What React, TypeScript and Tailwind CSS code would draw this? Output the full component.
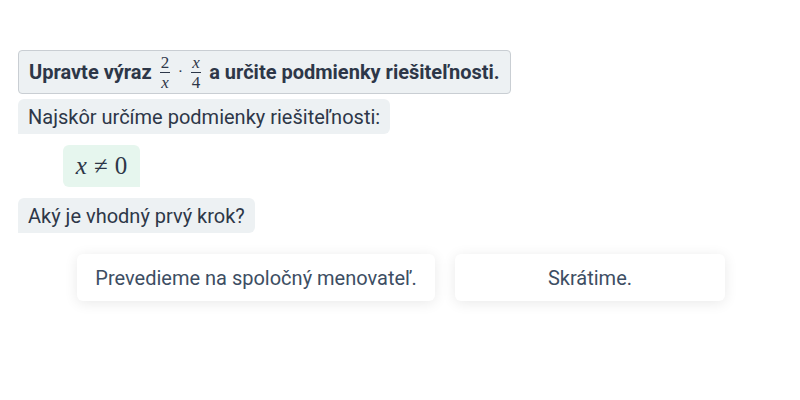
import React from 'react';

const Frac: React.FC<{ num: React.ReactNode; den: React.ReactNode }> = ({ num, den }) => (
    <span className="inline-flex flex-col items-center align-middle mx-[3px] leading-none text-[17px]" style={{ fontFamily: '"Liberation Serif", serif' }}>
        <span className="px-[1px] pb-[1px]">{num}</span>
        <span className="w-full border-t border-[#2d3748]" />
        <span className="px-[1px] pt-[1px]">{den}</span>
    </span>
);

const V: React.FC<{ children: React.ReactNode }> = ({ children }) => <i className="font-normal">{children}</i>;

export default function App() {
    return (
        <div className="w-[800px] h-[400px] bg-white text-[#2d3748]" style={{ fontFamily: 'Roboto, "Liberation Sans", sans-serif' }}>
            <div className="flex flex-col items-start pt-[50px] pl-[18px]">
                {/* Task */}
                <div className="h-[44px] flex items-center px-[10px] bg-[#edf1f3] border border-[#c9ced3] rounded-[4px] text-[20px] font-bold">
                    <span>Upravte výraz</span>
                    <span className="inline-flex items-center ml-[5px] mr-[5px] font-normal">
                        <Frac num="2" den={<V>x</V>} />
                        <span className="mx-[5px] text-[17px]">·</span>
                        <Frac num={<V>x</V>} den="4" />
                    </span>
                    <span>a určite podmienky riešiteľnosti.</span>
                </div>

                <div className="mt-[5px] h-[35px] flex items-center px-[10px] bg-[#edf1f3] rounded-t-[6px] rounded-br-[6px] text-[20px]">
                    Najskôr určíme podmienky riešiteľnosti:
                </div>

                <div className="mt-[11px] ml-[45px] h-[42px] w-[77px] flex items-center justify-center bg-[#e6f6ee] rounded-l-[6px] rounded-tr-[6px] text-[25px]" style={{ fontFamily: '"Liberation Serif", serif' }}>
                    <i>x</i>
                    <span className="mx-[7px]">≠</span>
                    <span>0</span>
                </div>

                <div className="mt-[11px] h-[35px] flex items-center px-[10px] bg-[#edf1f3] rounded-t-[6px] rounded-br-[6px] text-[20px]">
                    Aký je vhodný prvý krok?
                </div>
            </div>

            {/* Answers */}
            <div className="mt-[21px] flex justify-center gap-[20px] pl-[2px]">
                <button className="w-[358px] h-[47px] bg-white rounded-[6px] shadow-[0_2px_14px_rgba(0,0,0,0.09)] text-[20px] text-[#3d4e63]">
                    Prevedieme na spoločný menovateľ.
                </button>
                <button className="w-[270px] h-[47px] bg-white rounded-[6px] shadow-[0_2px_14px_rgba(0,0,0,0.09)] text-[20px] text-[#3d4e63]">
                    Skrátime.
                </button>
            </div>
        </div>
    );
}
